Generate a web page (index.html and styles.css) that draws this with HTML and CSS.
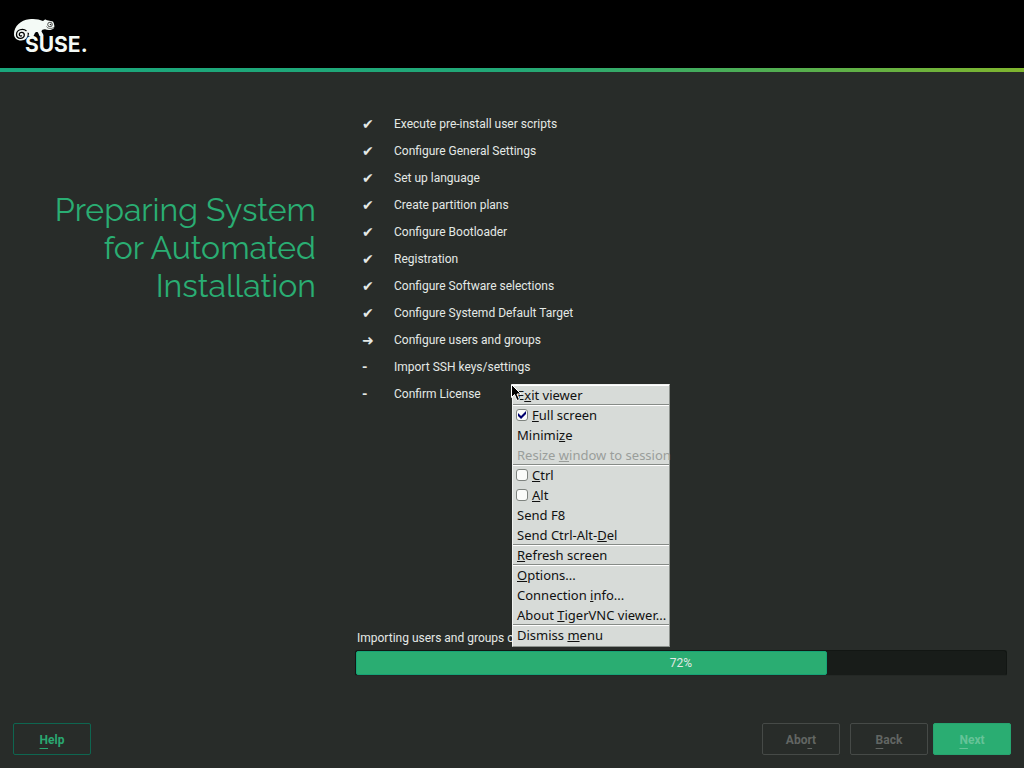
FILE: index.html
```html
<!DOCTYPE html>
<html lang="en">
<head>
<meta charset="utf-8">
<meta name="viewport" content="width=device-width, initial-scale=1">
<title>Preparing System for Automated Installation</title>
<link rel="stylesheet" href="styles.css">
</head>
<body>
<header class="banner">
  <svg class="logo" width="76" height="40" viewBox="0 0 76 40" role="img" aria-label="SUSE">
    <path fill="#f4faf6" d="M2 17C2 9 9 3 17 2.200C23 1.500 27 2.300 31 4L33 2.500C34 2.500 34 3 35 3.300L41 4.500C42.300 7 42.800 9.500 42 11C40 13.300 36 13.500 33 12.300C31 12.500 29.500 13 29.500 14.500C30 16 31.500 16.500 31.500 19H27.500L26 15.500C25 14.500 23 15 22.500 17L21.500 19H16.500L17 16L15.500 15.500C16.500 20 13.500 23.500 9 23.500C5 23.500 2 21 2 17Z"/>
    <path fill="none" stroke="#000" stroke-width="1.300" d="M14.500 14C11 11 4.500 12.500 4.500 17.500C4.500 22.500 12.300 22.500 12.300 18C12.300 14.500 7.300 14.500 7.300 17.500C7.300 19 9 19.500 9.800 18.500"/>
    <circle cx="38" cy="7.500" r="2.300" fill="none" stroke="#222" stroke-width=".8"/>
    <circle cx="38.500" cy="7.500" r=".8" fill="#222"/>
    <path fill="none" stroke="#333" stroke-width=".7" d="M34.500 9.500C36 12 39 12 42 10.500"/>
    <text class="logo-text" x="13" y="35">SUSE.</text>
  </svg>
</header>

<main class="content">
  <h1 class="title">Preparing System for Automated Installation</h1>
  <section class="progress-panel">
    <ul class="steps">
      <li class="step"><span class="mark">✔</span>Execute pre-install user scripts</li>
      <li class="step"><span class="mark">✔</span>Configure General Settings</li>
      <li class="step"><span class="mark">✔</span>Set up language</li>
      <li class="step"><span class="mark">✔</span>Create partition plans</li>
      <li class="step"><span class="mark">✔</span>Configure Bootloader</li>
      <li class="step"><span class="mark">✔</span>Registration</li>
      <li class="step"><span class="mark">✔</span>Configure Software selections</li>
      <li class="step"><span class="mark">✔</span>Configure Systemd Default Target</li>
      <li class="step"><span class="mark">➜</span>Configure users and groups</li>
      <li class="step"><span class="mark">-</span>Import SSH keys/settings</li>
      <li class="step"><span class="mark">-</span>Confirm License</li>
    </ul>
    <div class="status">
      <div class="status-label" id="status-label">Importing users and groups c</div>
      <div class="bar" role="progressbar" aria-labelledby="status-label" aria-valuenow="72" aria-valuemin="0" aria-valuemax="100">
        <div class="bar-fill" style="width:72.5%"></div>
        <span class="bar-value">72%</span>
      </div>
    </div>
  </section>
</main>

<footer class="actions">
  <button class="btn btn-help" type="button"><span class="key">H</span>elp</button>
  <div class="nav">
    <button class="btn btn-off" type="button" disabled>Abo<span class="key">r</span>t</button>
    <div class="nav-pair">
      <button class="btn btn-off" type="button" disabled><span class="key">B</span>ack</button>
      <button class="btn btn-next" type="button" disabled><span class="key">N</span>ext</button>
    </div>
  </div>
</footer>

<div class="menu">
  <div class="group"><button class="item" type="button">E<u>x</u>it viewer</button></div>
  <div class="group">
    <label class="item"><input class="check" type="checkbox" checked><span><u>F</u>ull screen</span></label>
    <button class="item" type="button">Minimi<u>z</u>e</button>
    <button class="item" type="button" disabled>Resize <u>w</u>indow to session</button>
  </div>
  <div class="group">
    <label class="item"><input class="check" type="checkbox"><span><u>C</u>trl</span></label>
    <label class="item"><input class="check" type="checkbox"><span><u>A</u>lt</span></label>
    <button class="item" type="button">Send F8</button>
    <button class="item" type="button">Send Ctrl-Alt-<u>D</u>el</button>
  </div>
  <div class="group"><button class="item" type="button"><u>R</u>efresh screen</button></div>
  <div class="group">
    <button class="item" type="button"><u>O</u>ptions...</button>
    <button class="item" type="button">Connection <u>i</u>nfo...</button>
    <button class="item" type="button">About <u>T</u>igerVNC viewer...</button>
  </div>
  <div class="group"><button class="item" type="button">Dismiss <u>m</u>enu</button></div>
</div>
<svg class="pointer" width="12" height="18" viewBox="0 0 12 18" aria-hidden="true">
  <path d="M.5.5V13.500L3.500 10.500L6 16.500L8.500 15.500L6 10H10Z" fill="#000" stroke="#fff"/>
</svg>
</body>
</html>
```

FILE: styles.css
```css
* {
  box-sizing: border-box;
}

body {
  position: relative;
  display: flex;
  flex-direction: column;
  min-height: 100vh;
  margin: 0;
  background: #282c29;
  color: #e4e9e6;
  font: 12px/16px Roboto, "Liberation Sans", sans-serif;
}

button {
  font: inherit;
}

.banner {
  height: 72px;
  padding: 17px 12px 0;
  background: #000;
  border-bottom: 4px solid;
  border-image: linear-gradient(to right, #1aa77c, #22a877 50%, #80b52e) 1;
}

.logo {
  display: block;
}

.logo-text {
  fill: #f4faf6;
  font: 700 21px Inter, sans-serif;
}

.content {
  flex: 1;
  display: grid;
  grid-template-columns: 316px 1fr;
  column-gap: 39px;
  padding: 38px 17px 47px 0;
}

.title {
  margin: 0;
  padding: 81px 0 0 40px;
  color: #2aae73;
  font: 400 32px/38px Raleway, Lato, sans-serif;
  text-align: right;
}

.progress-panel {
  display: flex;
  flex-direction: column;
  justify-content: space-between;
}

.steps {
  margin: 0;
  padding: 0;
  list-style: none;
}

.step {
  display: flex;
  align-items: center;
  height: 27px;
}

.mark {
  width: 39px;
  padding-left: 7px;
  font: 700 14px/16px Roboto, "DejaVu Sans", sans-serif;
}

.status-label {
  padding: 0 2px 4px;
}

.bar {
  position: relative;
  height: 26px;
  background: #181c19;
  border: 1px solid #121613;
  border-bottom-color: #242825;
  border-radius: 3px;
}

.bar-fill {
  height: 24px;
  background: #2aad72;
  border: 1px solid #16a376;
  border-radius: 2px;
}

.bar-value {
  position: absolute;
  inset: 0;
  line-height: 24px;
  text-align: center;
}

.actions {
  display: flex;
  justify-content: space-between;
  padding: 0 13px 13px;
}

.nav {
  display: flex;
  gap: 10px;
}

.nav-pair {
  display: flex;
  gap: 5px;
}

.btn {
  width: 78px;
  height: 32px;
  padding: 1px 0 0;
  background: transparent;
  border: 1px solid #464a47;
  border-radius: 2px;
  font-weight: 700;
}

.key {
  text-decoration: underline 1px;
  text-underline-offset: 4px;
}

.btn-help {
  border-color: #0e6650;
  color: #2aa871;
}

.btn-off {
  color: #626663;
}

.btn-next {
  background: #2aad72;
  border-color: #26a46f;
  color: #66c398;
}

.menu {
  position: absolute;
  top: 50%;
  left: 50%;
  width: 158px;
  background: #d7dbd8;
  border: 1px solid #f0f2f0;
  border-color: #f0f2f0 #8c918d #8c918d #f0f2f0;
  color: #111;
  font: 13px/18px "Noto Sans", sans-serif;
}

.group {
  box-shadow: inset 0 1px #fff, inset 0 -1px #868b87;
}

.group:last-child {
  padding-bottom: 1px;
  box-shadow: inset 0 1px #fff;
}

.item {
  display: flex;
  align-items: center;
  width: 100%;
  height: 20px;
  padding: 0 4px;
  background: transparent;
  border: 0;
  color: inherit;
  white-space: pre;
}

.item u {
  text-underline-offset: 1px;
}

.item:disabled {
  color: #9a9e9b;
}

.check {
  appearance: none;
  display: grid;
  place-items: center;
  width: 12px;
  height: 12px;
  margin: 0 4px 0 -1px;
  background: #fafcfa;
  border: 1px solid #7e837f;
  border-radius: 3px;
}

.check:checked::before {
  content: "";
  width: 8px;
  height: 8px;
  background: #00006e;
  clip-path: polygon(0 25%, 38% 62%, 100% 0, 100% 38%, 38% 100%, 0 62%);
}

.pointer {
  position: absolute;
  top: 50%;
  left: 50%;
  margin-left: -1px;
}
```
